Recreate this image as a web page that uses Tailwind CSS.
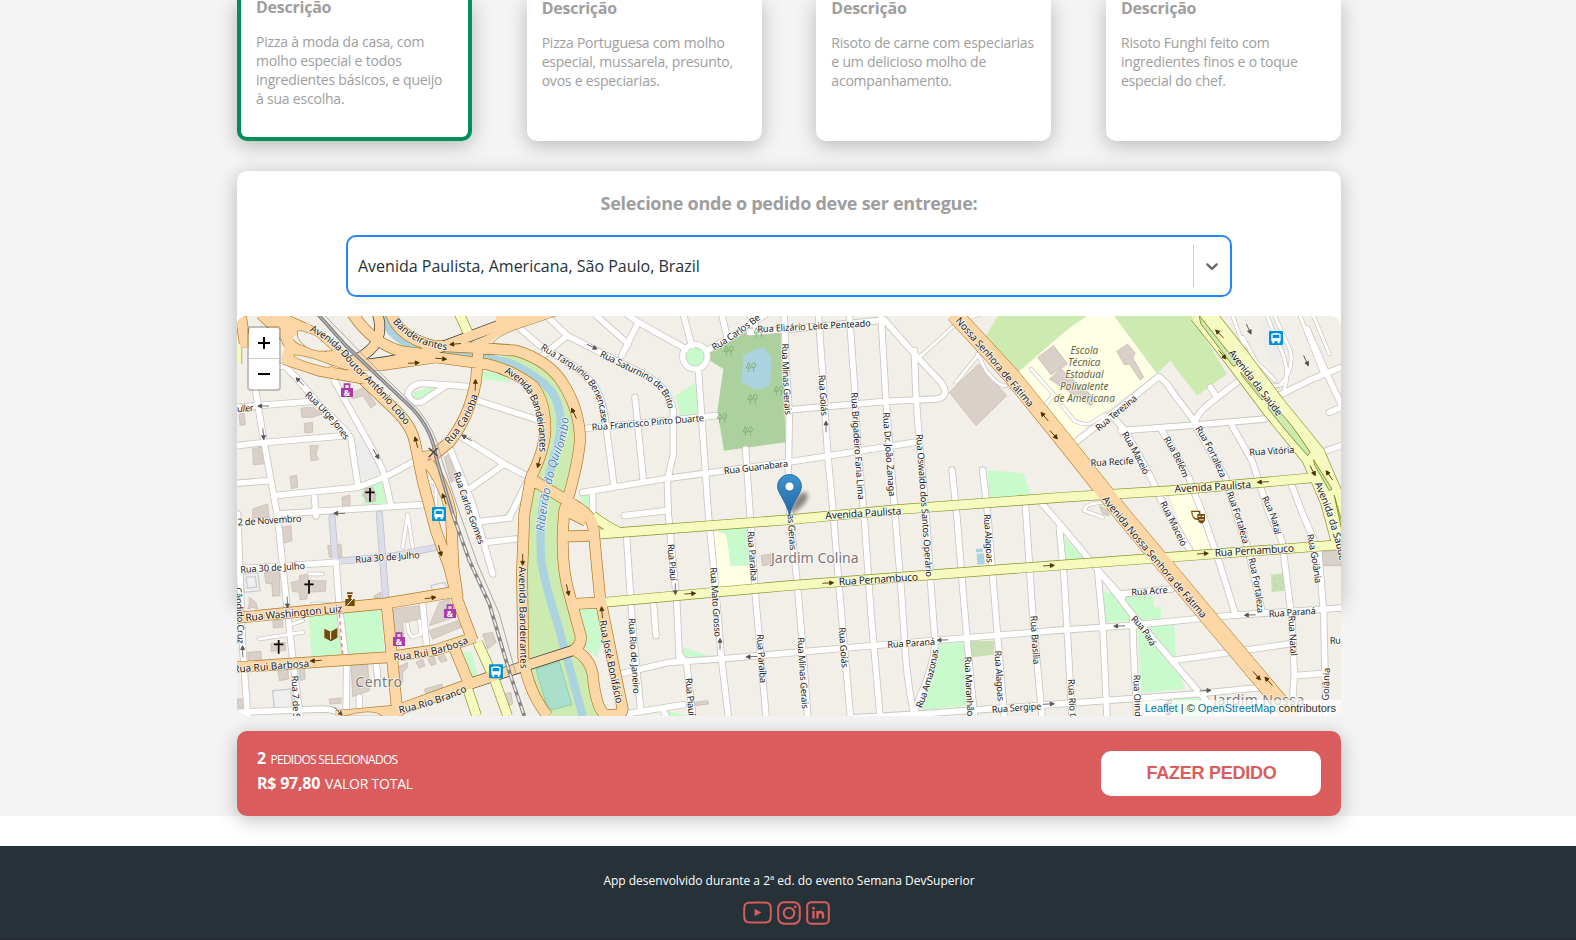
<!DOCTYPE html>
<html lang="pt-BR">
<head>
<meta charset="utf-8">
<title>DS Delivery</title>
<script src="https://cdn.jsdelivr.net/npm/@tailwindcss/browser@4"></script>
</head>
<body class="h-[940px] overflow-hidden bg-white font-['Open_Sans',sans-serif]">
<main class="flex h-[816px] flex-col bg-[#f4f4f4] pr-[235px] pl-[237px]">
  <section class="flex h-[141px] shrink-0 justify-between text-sm leading-[19px] tracking-[-0.21px] text-[#9e9e9e]">
    <article class="h-[141px] w-[235px] rounded-b-[10px] border-4 border-t-0 border-[#008e5b] bg-white px-[15px] shadow-[0_4px_20px_rgba(0,0,0,0.25)]">
      <h3 class="-mt-[4px] h-[36px] text-base leading-[22px] font-bold tracking-[-0.24px]">Descrição</h3>
      <p>Pizza à moda da casa, com<br>molho especial e todos<br>ingredientes básicos, e queijo<br>à sua escolha.</p>
    </article>
    <article class="h-[141px] w-[235px] rounded-b-[10px] bg-white px-[15px] shadow-[0_4px_20px_rgba(0,0,0,0.25)]">
      <h3 class="-mt-[3px] h-[36px] text-base leading-[22px] font-bold tracking-[-0.24px]">Descrição</h3>
      <p>Pizza Portuguesa com molho<br>especial, mussarela, presunto,<br>ovos e especiarias.</p>
    </article>
    <article class="h-[141px] w-[235px] rounded-b-[10px] bg-white px-[15px] shadow-[0_4px_20px_rgba(0,0,0,0.25)]">
      <h3 class="-mt-[3px] h-[36px] text-base leading-[22px] font-bold tracking-[-0.24px]">Descrição</h3>
      <p>Risoto de carne com especiarias<br>e um delicioso molho de<br>acompanhamento.</p>
    </article>
    <article class="h-[141px] w-[235px] rounded-b-[10px] bg-white px-[15px] shadow-[0_4px_20px_rgba(0,0,0,0.25)]">
      <h3 class="-mt-[3px] h-[36px] text-base leading-[22px] font-bold tracking-[-0.24px]">Descrição</h3>
      <p>Risoto Funghi feito com<br>ingredientes finos e o toque<br>especial do chef.</p>
    </article>
  </section>

  <section class="mt-[30px] mb-[125px] flex h-[435px] shrink-0 flex-col items-center rounded-[10px] bg-white shadow-[0_4px_20px_rgba(0,0,0,0.25)]">
    <h2 class="mt-[20px] h-[44px] shrink-0 text-lg leading-[25px] font-bold tracking-[-0.27px] text-[#9e9e9e]">Selecione onde o pedido deve ser entregue:</h2>
    <div class="flex h-[62px] w-[886px] shrink-0 items-center rounded-[10px] border-2 border-[#2684ff] bg-white pl-[10px]">
      <span class="grow text-base text-[#263238]">Avenida Paulista, Americana, São Paulo, Brazil</span>
      <span class="h-[42px] w-px bg-[#cccccc]"></span>
      <svg class="mx-2 size-5 fill-[#666666]" viewBox="0 0 20 20"><path d="M4.516 7.548c0.436-0.446 1.043-0.481 1.576 0l3.908 3.747 3.908-3.747c0.533-0.481 1.141-0.446 1.574 0 0.436 0.445 0.408 1.197 0 1.615-0.406 0.418-4.695 4.502-4.695 4.502-0.217 0.223-0.502 0.335-0.787 0.335s-0.57-0.112-0.789-0.335c0 0-4.287-4.084-4.695-4.502s-0.436-1.17 0-1.615z"/></svg>
    </div>
    <div class="relative mt-[19px] h-[400px] w-[1104px] shrink-0 overflow-hidden rounded-[10px] bg-[#f2efe9]">
<svg id="map" class="block h-[400px] w-[1104px] font-['Noto_Sans',sans-serif]" viewBox="3 6 3312 1200" fill="none">
<defs>
<g id="service">
<path d="M2938 0L3018 130L3078 195Q3110 225 3140 210M2988 0L3028 110L3118 200M3118 10L3163 110Q3175 170 3130 215M3095 10L3145 130Q3160 190 3145 225M2478 275L2515 320Q2540 335 2565 328L2608 300M2385 165L2470 260M2225 120L2250 170Q2290 220 2310 215M2160 205L2225 125M2160 30L2050 130M2170 20L2235 0M2450 245L2420 285M500 700L515 600L530 700M580 600V510Q590 490 600 520V600M220 780H260M230 870H280M70 975L200 955M170 930L200 920M515 930Q515 960 530 970L555 960L550 920M3020 70L3060 140M3190 0L3260 180M3230 0L3280 120M2545 590Q2545 570 2600 565M2545 590L2600 610"/>
</g>
<g id="minor">
<path d="M842 35L912 95L1012 155Q1060 195 1072 210Q1105 260 1112 350L1134 515M932 6L994 65L907 135M994 65L1112 125L1222 180Q1300 220 1312 290L1312 420L1294 500L1297 600L1322 860L1330 1035M1330 1020L1352 1050L1370 1206M1082 6L1177 90M1207 25L1157 125M1172 0L1207 25L1350 105M1342 0L1367 95M1387 165L1417 600L1437 800L1457 1040L1477 1206M1457 0L1472 65M1412 110L1500 60L1590 0M1540 55L1662 45L1945 18M1540 0L1565 50"/>
<path d="M1644 0L1650 150L1660 300L1657 470L1662 600L1685 820L1700 1000L1715 1206M1747 0L1760 180L1775 420L1792 600L1812 850L1825 1000L1843 1206M1840 0L1855 210L1865 400L1884 600L1905 900L1932 1206M1935 0L1950 260L1977 600L1995 820L2010 1040Q2018 1130 2035 1206M1945 18L2040 125L2115 205Q2145 250 2100 255L1950 262L1655 288M2035 110L2040 250L2050 380L2070 600L2085 820L2097 980Q2095 1050 2055 1140L2030 1206M1040 535L1282 495L1652 445L2035 385M2148 468L2162 600L2195 1000L2215 1206M2240 468L2255 600L2290 1030L2305 1206M2368 570L2390 900L2418 1206M2470 640L2485 800L2508 1206M2415 565L2480 640L2588 770L2688 900L2808 1040L2950 1206M2585 770L2600 930L2613 1206M2690 910L2692 990L2702 1206"/>
<path d="M1152 1080L1300 1045Q1400 1038 1450 1035L1910 995L2478 948L2678 935L2978 905L3315 882M1840 1212L2050 1200L2400 1175L2878 1140L3078 1120M1167 1200L1342 1172M1172 670L1187 900L1214 1190M1252 862L1260 965M1529 405L1557 830L1590 1206M1197 250L1222 500M1050 343L1440 305M1070 535V600M1165 605L1290 590M1280 1185L1290 1206"/>
<path d="M2518 385L2628 300L2768 188Q2790 200 2810 235L2878 325M2655 350L2878 333L3088 315M2878 320Q2890 290 2925 265L3003 205M2923 220L2943 250M2628 305L2668 350L2740 480L2790 590L2860 705M2778 350L2858 490L2900 600L2948 740L2998 900M2878 335L2968 490L3000 600L3038 710L3078 895M2988 335L3048 440L3100 600L3138 680L3168 920L3175 1080L3170 1155M3168 515L3200 600L3248 710L3263 900L3270 1206M3178 1085L3263 1078M2808 1040L3158 990M2653 840L2808 825M3118 250L3218 200L3315 160M3213 45L3268 170L3315 270M3280 295L3315 280M3258 415L3315 395M2600 785L2660 850"/>
<path d="M95 165L145 155L180 190L260 285Q330 345 345 375L365 510M295 200L400 390Q440 460 445 485L465 575M58 225L85 390L105 500L125 610L150 850L172 1050L192 1206M0 280L230 262M0 395L90 385L330 365M0 508L100 500M115 545L365 520L445 490L530 445M235 545L240 606M125 600L560 572M640 400L710 570L770 780M665 362L805 450L880 490M805 450L700 525M725 260L912 320M700 218L560 208Q520 215 515 240Q530 275 560 262L630 215M735 622L822 612M750 685L840 675M820 610L870 510M0 765L300 745L310 880L332 1060L330 1206M560 870L572 1000M5 600L20 1000L35 1206M0 1195L260 1185Q300 1185 320 1206M420 1040L425 1090M370 1150V1206"/>
</g>
<g id="ped"><path d="M288 610L298 740M430 600L450 860M300 742L450 730L600 700"/></g>
<g id="yellow"><path d="M1092 660L1250 648L1660 617L1980 587L2478 550L2800 530L3245 490M1070 605Q1100 630 1150 655M1105 865L1655 815L2490 752L3315 692M670 0L700 65M725 985L775 1095L815 1206M690 1110L722 1206M3 90V150"/></g>
<g id="orange">
<path d="M14 0L28 100M75 0L150 70M110 0L220 50L330 140L390 205L480 290Q530 340 538 390L560 500L600 650L640 760L665 860L710 980M150 60Q150 110 240 120L330 150L440 153L600 130L750 150Q822 165 890 215Q928 260 928 350Q925 410 885 490L865 600L858 780L862 1030Q875 1130 935 1206M145 135L250 170L390 195M350 0Q410 90 500 113L560 120M465 0Q490 70 590 95L700 100L840 110Q940 140 982 210Q1032 290 1032 380Q1025 460 985 590Q970 740 1000 840L1030 950Q1045 990 1010 1010M728 105L720 200Q700 310 640 385L590 425L550 430M570 440Q625 500 645 600L652 760L665 850M0 912L200 892L450 868L650 835M0 1060L450 1030L600 1008L715 970M452 870L470 1050L485 1206M300 1206L480 1190L700 1110L760 1090M650 990L700 1110M885 495L1010 570Q1065 600 1072 640L1092 850L1130 1040L1160 1185Q1160 1206 1110 1203Q1080 1190 1070 1080Q1060 1030 1015 1008M985 668L1078 664M1010 870L1100 865M990 590L1050 620"/>
</g>
<path id="ramp" d="M425 0Q445 70 400 110Q360 145 320 145M400 150Q500 140 600 105L840 15M700 1110L822 1070L1015 1008"/>
</defs>

<!-- land use -->
<path fill="#cdebb0" d="M800 115Q920 140 990 210Q1032 290 1025 380L970 600Q960 740 990 840L1040 990L1100 1206H930L870 1080L865 600L900 480Q940 400 935 310Q920 220 800 150ZM2290 0H2660L2340 180L2240 80ZM2628 0H2863L2973 180L2883 245L2803 140L2763 180Z"/>
<path fill="#ffffe5" d="M2340 180L2490 50L2560 0H2630L2763 180L2598 300L2510 375ZM2798 540L2890 520L2922 705L2865 710ZM1432 650L1480 665V755H1560L1555 810L1445 820Z"/>
<path fill="#add19e" d="M1422 110L1522 55H1634L1650 385L1464 410L1444 290L1462 165L1422 140Z"/>
<path fill="#aad3df" d="M1522 125Q1560 100 1585 102L1607 130L1602 215L1562 228L1517 205ZM2222 720L2243 718L2246 750L2224 752ZM2220 705L2240 703V714L2220 715Z"/>
<path fill="#c8facc" d="M1319 245L1379 205L1387 300L1332 305ZM2255 468L2362 478L2385 545L2260 560ZM2110 988L2183 980L2195 1175L2055 1188ZM1435 645L1540 640L1542 755L1485 755L1470 660ZM1025 885L1085 880L1100 985L1080 1030L1050 1005ZM1340 1000L1430 1030H1345ZM530 235L600 215L600 225L560 258H540ZM735 170L822 185V205L735 195ZM370 512L447 500L457 572L385 583ZM220 905L435 888L445 1012L225 1030ZM678 1018L705 1010L728 1090L703 1096ZM2600 830L2655 845H2750L2755 880H2775V915L2608 925ZM2705 940L2815 930L2820 1030L2845 1125L2715 1138ZM2485 670L2545 735L2482 740ZM2810 1145H2890L2900 1206H2800ZM800 600L822 585V600ZM1030 545L1062 540V600ZM1290 1190L1360 1206H1290Z"/>
<path fill="#c8dfb3" d="M2204 982L2274 980V1022L2206 1030ZM3105 782L3143 778L3146 830L3107 834Z"/>
<path fill="#aae0cb" stroke="#80c0a8" stroke-width="2" d="M900 1065L970 1043L1008 1172L936 1190Z"/>
<path fill="#ececec" d="M355 385L390 370L437 480L375 495ZM3070 30L3130 20L3170 110L3100 150Z"/>
<!-- buildings -->
<g fill="#d9d0c9" stroke="#c4b6ab" stroke-width="2">
<path d="M2140 235L2228 150L2312 245L2220 335ZM2405 130L2453 95L2495 150L2445 182ZM2440 195L2475 165L2580 255L2565 275ZM2642 112L2675 90L2698 118L2690 130L2723 190L2712 198L2680 150L2665 152ZM195 282L230 280L260 300L230 310H198ZM205 328L230 325V355L207 357ZM340 240L385 220L420 270L405 282L380 245L350 255ZM50 403L78 400L82 450L52 452ZM222 395H247L240 420L248 437L225 440ZM162 487L182 484L185 520L166 524ZM10 300L24 298L28 332L12 334ZM318 550L342 543V575L320 580ZM50 585L95 570L100 612H50ZM135 640L165 635L168 680L142 688ZM165 805L190 800V785L215 780L218 800L270 800L268 832L215 835L213 855L192 857L190 835L170 832ZM85 775L130 770L132 845L110 847L108 810L90 808ZM470 885L550 875L555 915L500 925L505 990L475 1000ZM610 865L640 855L655 910L580 935ZM580 950L665 920L675 940L590 975ZM345 1050L395 1045L400 1130L350 1148ZM105 988L148 985V1010L105 1012ZM35 1015L75 1012V1040L37 1042ZM125 1065L155 1060L158 1095L130 1100ZM565 1125L618 1110L620 1125L570 1140ZM740 960L770 955L780 985L755 1005ZM790 1145L825 1135L830 1170L795 1185ZM625 430L640 420L660 495L645 505ZM385 525L410 520L420 560L390 565ZM380 545L395 520L420 540L410 565ZM1575 725L1605 720V750L1580 755ZM1375 1165L1415 1160L1418 1170L1378 1175ZM3258 712L3315 708V755H3260ZM2590 575L2615 590L2620 605L2600 600ZM275 695L315 690L318 730H280ZM485 1060L515 1045V1060L500 1075V1105H490ZM540 1045L560 1035L567 1055L550 1063ZM575 1035L595 1028L600 1050L585 1055ZM605 1030L625 1022L633 1040L615 1045Z"/>
<path d="M40 850L60 865L65 885L50 880L35 885L40 868ZM415 845L435 835V850L415 855ZM3 1155H25V1190H3ZM280 1155L315 1152V1168L282 1170ZM190 1065L205 1062L208 1095L192 1100ZM110 920L140 918V940L112 942Z"/>
</g>
<g fill="#efefef" stroke="#ccc" stroke-width="4"><path d="M20 780L65 775L72 830L25 835ZM30 790L58 788L62 820L34 822ZM110 1130L165 1125L170 1180L115 1185ZM585 815L625 805L635 825L590 830Z"/></g>
<!-- river -->
<path stroke="#aad3df" stroke-width="25" d="M435 0Q460 80 570 108L720 122L822 148Q900 180 945 230Q985 290 970 370L935 500Q905 620 917 750Q935 840 965 930L1040 1206"/>
<!-- roads -->
<g stroke-linecap="round" stroke-linejoin="round">
<use href="#service" stroke="#c8c4be" stroke-width="13"/>
<use href="#minor" stroke="#cac6c0" stroke-width="22"/>
<circle cx="1377" cy="128" r="37" stroke="#cac6c0" stroke-width="20" fill="#c8facc"/>
<use href="#ped" stroke="#bbbbc8" stroke-width="21"/>
<use href="#service" stroke="#fff" stroke-width="9"/>
<use href="#ped" stroke="#dddde9" stroke-width="17"/>
<use href="#minor" stroke="#fff" stroke-width="17"/>
<circle cx="1377" cy="128" r="37" stroke="#fff" stroke-width="16"/>
<g stroke-linecap="butt">
<use href="#yellow" stroke="#8b952c" stroke-width="31"/><path stroke="#8b952c" stroke-width="76" d="M2895 -5L2990 115L3110 275L3232 425L3290 560L3325 690"/>
<use href="#orange" stroke="#ad7a25" stroke-width="35"/>
<use href="#ramp" stroke="#333" stroke-width="33"/>
<path stroke="#ad7a25" stroke-width="51" d="M2155 0L2330 190L2490 388L2658 600L2930 925L3170 1210"/>
<use href="#yellow" stroke="#f7fabf" stroke-width="27"/><path stroke="#f7fabf" stroke-width="72" d="M2895 -5L2990 115L3110 275L3232 425L3290 560L3325 690"/>
<use href="#orange" stroke="#fcd6a4" stroke-width="31"/>
<use href="#ramp" stroke="#fcd6a4" stroke-width="29"/>
<path stroke="#fcd6a4" stroke-width="48" d="M2155 0L2330 190L2490 388L2658 600L2930 925L3170 1210"/>
<path fill="#fcd6a4" d="M110 8L220 30L300 105L210 90L190 60L170 70L180 110L290 155L300 195L230 175L135 140L150 80ZM780 0H965L840 45L780 70L745 100L700 90L780 50Z"/>
<path stroke="#ad7a25" stroke-width="2" d="M965 4L840 46Q780 68 770 88L822 92"/>
</g>
<path fill="#f2efe9" stroke="#ad7a25" stroke-width="2" d="M185 50Q190 45 240 65L290 110L250 112Q200 105 185 70ZM175 122Q230 128 290 155Q280 165 250 155Q190 140 175 128ZM325 1206Q410 1180 440 1206Z"/>
<path fill="#cdebb0" stroke="#8b952c" stroke-width="3" d="M2890 5L3005 150L2992 157L2895 30ZM3015 175L3085 255L3078 258L3018 185ZM3098 272Q3140 285 3222 415L3215 425Q3140 340 3098 285ZM3233 438L3288 525L3280 530L3237 455ZM3295 545L3325 650L3320 655Z"/>
</g>
<!-- railway -->
<g stroke-width="4"><path stroke="#858585" stroke-width="11" d="M245 0L330 95L430 190L530 285Q590 350 600 430L650 600L700 740L760 870L822 1080L865 1206"/><path stroke="#eee" stroke-width="5" stroke-dasharray="22 12" d="M650 600L700 740L760 870L822 1080L865 1206"/><path stroke="#ccc" stroke-width="3" d="M245 0L330 95L430 190L530 285Q590 350 600 430L650 600"/><path stroke="#aaa" stroke-width="3" d="M262 0L440 183L545 285Q600 350 615 430L672 600L725 750L790 900L840 1080"/></g>
<path stroke="#e77" stroke-width="4" stroke-dasharray="12 10" d="M310 900L320 1020M575 438L620 425"/>
<path stroke="#444" stroke-width="4" d="M578 402L605 426M605 402L578 430"/>
<!-- trees in the park -->
<g stroke="#84b279" stroke-width="3" id="trees"></g>
<g fill="#b3d89f"><circle cx="3115" cy="795" r="3"/><circle cx="3132" cy="792" r="3"/><circle cx="3120" cy="812" r="3"/><circle cx="3135" cy="820" r="3"/></g>
<g id="arrows" stroke-width="4"></g>
<g id="labels" fill="#222" stroke="#fff" stroke-opacity=".75" stroke-width="5" stroke-linejoin="round" paint-order="stroke"></g>
<!-- points of interest -->
<g fill="#ac39ac"><path id="shop" d="M315 222H323V208H343V222H351V249H315ZM328 222H338V213H328Z" fill-rule="evenodd"/><use href="#shop" x="309" y="663"/><use href="#shop" x="156" y="747"/></g>
<g fill="#fff" font-size="25" font-weight="700"><text x="323" y="246">&amp;</text><text x="632" y="909">&amp;</text><text x="479" y="993">&amp;</text></g>
<g id="bus"><rect x="588" y="579" width="42" height="42" rx="3" fill="#0092da"/><path fill="#fff" fill-rule="evenodd" d="M595 588Q609 582 623 588V610H620V616H614V610H604V616H598V610H595ZM599 590V600H619V590Z"/></g>
<use href="#bus" x="171" y="472"/><use href="#bus" x="2511" y="-528"/>
<g stroke="#000" stroke-width="5"><path id="cross" d="M402 522V563M388 535H416"/><use href="#cross" x="-183" y="276"/><use href="#cross" x="-274" y="456"/></g>
<g fill="#734a08"><path d="M265 944L284 953L304 942V971L285 982L265 971ZM333 835H350V840H333ZM334 843H349L346 850L344 855H356V876H328V855H338Z"/><path stroke="#fff" stroke-width="3" d="M284 953V976M333 874L351 855"/><path fill-rule="evenodd" d="M2865 590H2893V600H2907V620Q2898 634 2888 624L2886 618Q2868 620 2865 590ZM2869 594Q2870 612 2884 614V600H2889V594ZM2888 605V609H2894V605ZM2898 605V609H2904V605ZM2890 616V619H2903V616Z"/></g>
</svg>
      <svg class="absolute top-[158px] left-[540px] h-[43px] w-[50px]" viewBox="0 0 50 43">
        <defs><filter id="soft" x="-50%" y="-50%" width="200%" height="200%"><feGaussianBlur stdDeviation="2.2"/></filter><linearGradient id="pin" x2="0" y2="1"><stop stop-color="#3f92cf"/><stop offset="1" stop-color="#2068a8"/></linearGradient></defs>
        <path d="M13 41L17 27Q24 16 30 19Q33 25 24 33Z" fill="#000" opacity=".45" filter="url(#soft)"/>
        <path d="M12.500 .6C5.500 .6 .6 6 .6 12.500C.6 19 8 25 12.500 41C17 25 24.400 19 24.400 12.500C24.400 6 19.500 .6 12.500 .6Z" fill="url(#pin)" stroke="#2e6c97"/><circle cx="12.500" cy="12.500" r="4.400" fill="#fff" stroke="#2e6c97" stroke-width=".6"/>
      </svg>
      <div class="absolute top-[10px] left-[10px] flex w-[34px] flex-col rounded-[4px] border-2 border-black/20 bg-white bg-clip-padding">
        <span class="flex h-[31px] items-center justify-center border-b border-[#cccccc]"><svg class="size-3" viewBox="0 0 12 12" stroke="#000" stroke-width="2"><path d="M0 6H12M6 0V12"/></svg></span>
        <span class="flex h-[30px] items-center justify-center"><svg class="size-3" viewBox="0 0 12 12" stroke="#000" stroke-width="2"><path d="M0 6H12"/></svg></span>
      </div>
      <div class="absolute right-0 bottom-0 bg-white/70 px-[5px] font-['Liberation_Sans',sans-serif] text-[11px] leading-[16.500px] text-[#333333]"><span class="text-[#0078a8]">Leaflet</span> | © <span class="text-[#0078a8]">OpenStreetMap</span> contributors</div>
    </div>
  </section>

  <section class="flex h-[85px] shrink-0 items-center justify-between rounded-[10px] bg-[#da5c5c] px-5 text-white shadow-[0_4px_20px_rgba(0,0,0,0.25)]">
    <div class="pb-[5px] leading-[26px]">
      <div class="text-xs tracking-[-0.72px]"><b class="mr-[5px] text-base">2</b>PEDIDOS SELECIONADOS</div>
      <div class="pt-px text-sm leading-[25px] tracking-[-0.21px]"><b class="mr-[5px] text-base leading-[25px] tracking-[-0.24px]">R$ 97,80</b>VALOR TOTAL</div>
    </div>
    <button class="h-[45px] w-[220px] rounded-[10px] bg-white pb-[2px] pl-px font-['Liberation_Sans',sans-serif] text-lg font-bold tracking-[-0.27px] text-[#da5c5c]">FAZER PEDIDO</button>
  </section>
</main>
<footer class="mt-[30px] flex h-[94px] flex-col items-center border-b border-[#282535] bg-[#263238] pt-[26px] text-white">
  <p class="ml-[2px] text-xs leading-[17px]">App desenvolvido durante a 2ª ed. do evento Semana DevSuperior</p>
  <div class="mt-[11px] mr-[4px] flex h-[25px] items-center gap-[5px]">
    <svg class="h-[23px] w-[29px]" viewBox="0 0 30 23" fill="none" stroke="#da5c5c" stroke-width="2"><path d="M5 1.500Q15 .7 25 1.500Q28 2 28.500 5Q29.100 11.500 28.500 18Q28 21 25 21.500Q15 22.300 5 21.500Q2 21 1.500 18Q.9 11.500 1.500 5Q2 2 5 1.500Z"/><path d="M12 7.500V15.500L19 11.500Z" fill="#da5c5c" stroke="none"/></svg>
    <svg class="size-6" viewBox="0 0 24 24" fill="none" stroke="#da5c5c" stroke-width="2"><rect x="1.200" y="1.200" width="21.600" height="21.600" rx="6"/><circle cx="12" cy="12" r="5.300"/><circle cx="18.300" cy="5.800" r="1.400" fill="#da5c5c" stroke="none"/></svg>
    <svg class="size-6" viewBox="0 0 24 24" fill="none" stroke="#da5c5c" stroke-width="2"><rect x="1.200" y="1.200" width="21.600" height="21.600" rx="4"/><path d="M7.500 10V17.500M11.500 10V17.500M11.500 13.500Q12 11 14.300 11Q17 11 17 14V17.500" stroke-width="2.400"/><circle cx="7.500" cy="7.200" r="1.400" fill="#da5c5c" stroke="none"/></svg>
  </div>
</footer>
<script>
const NS = 'http://www.w3.org/2000/svg';
const make = (parent, tag, attrs) => {
  const el = document.createElementNS(NS, tag);
  for (const k in attrs) el.setAttribute(k, attrs[k]);
  return parent.appendChild(el);
};
// Street names: text, centre line of the lettering, font size
const streets = [
  ['Avenida Doutor Antônio Lobo', 'M225 42Q300 75 360 160Q440 230 517 328', 30],
  ['Bandeirantes', 'M478 16Q530 85 635 98', 30],
  ['Rua Urge Jones', 'M212 238Q290 305 335 375', 28],
  ['uller', 'M3 285L54 281', 28],
  ['Rua Carioba', 'M632 385Q700 310 715 240', 30],
  ['Avenida Bandeirantes', 'M808 168Q925 215 921 415', 30],
  ['Rua Carlos Gomes', 'M662 475Q695 580 738 690', 28],
  ['Rua Tarquínio Benencase', 'M918 97L1020 160Q1100 215 1106 328', 28],
  ['Rua Saturnino de Brito', 'M1094 118L1220 180Q1300 220 1305 285', 28],
  ['Rua Francisco Pinto Duarte', 'M1067 340L1405 311', 28],
  ['Rua Guanabara', 'M1464 471L1657 448', 28],
  ['Rua Carlos Be', 'M1430 102Q1500 60 1570 6', 28],
  ['Rua Elizário Leite Penteado', 'M1564 46L1905 27', 28],
  ['Rua Minas Gerais', 'M1647 88Q1650 200 1657 303', 28],
  ['Rua Goiás', 'M1757 182L1766 306', 28],
  ['Rua Brigadeiro Faria Lima', 'M1855 235Q1864 400 1876 558', 28],
  ['Rua Dr. João Zanaga', 'M1950 295L1969 548', 28],
  ['Rua Oswaldo dos Santos Operário', 'M2050 360Q2066 580 2080 790', 28],
  ['Nossa Senhora de Fátima', 'M2165 14Q2280 145 2388 275', 30],
  ['Avenida Nossa Senhora de Fátima', 'M2605 550Q2760 740 2907 908', 30],
  ['Rua Terezina', 'M2582 345L2700 248', 28],
  ['Avenida da Saúde', 'M2984 110Q3070 220 3133 302', 30],
  ['Rua Recife', 'M2564 447L2694 440', 28],
  ['Rua Vitória', 'M3040 415L3176 407', 28],
  ['Rua Maceió', 'M2665 355Q2705 420 2732 480', 28],
  ['Rua Belém', 'M2790 370Q2830 430 2850 490', 28],
  ['Rua Fortaleza', 'M2885 338Q2935 415 2963 490', 28],
  ['Avenida Paulista', 'M2816 525L3046 511', 31],
  ['Rua Maceió', 'M2780 563Q2820 640 2845 695', 28],
  ['Rua Fortaleza', 'M2980 533Q3015 620 3030 690', 28],
  ['Rua Natal', 'M3085 548Q3120 610 3125 662', 28],
  ['Rua Goiânia', 'M3222 660Q3240 740 3247 808', 28],
  ['Avenida da Saúde', 'M3245 505Q3290 600 3322 740', 30],
  ['Avenida Paulista', 'M1768 605L1997 590', 31],
  ['Rua Pernambuco', 'M1808 803L2047 788', 31],
  ['Rua Pernambuco', 'M2936 717L3175 702', 31],
  ['as Gerais', 'M1664 600L1672 710', 28],
  ['Rua Piauí', 'M1304 690L1313 802', 28],
  ['Rua Mato Grosso', 'M1432 760L1446 970', 28],
  ['Rua Paraíba', 'M1544 652L1555 802', 28],
  ['Rua Paraíba', 'M1572 960L1582 1108', 28],
  ['Rua Rio de Janeiro', 'M1187 912L1202 1140', 28],
  ['Rua José Bonifácio', 'M1100 918Q1128 1070 1152 1168', 30],
  ['Rua Piauí', 'M1358 1092L1368 1206', 28],
  ['Rua Minas Gerais', 'M1694 970L1708 1185', 28],
  ['Rua Goiás', 'M1818 940L1827 1062', 28],
  ['Rua Paraná', 'M1954 992L2098 983', 28],
  ['Rua Amazonas', 'M2048 1180Q2085 1090 2098 1005', 28],
  ['Rua Alagoas', 'M2253 600L2262 747', 28],
  ['Rua Maranhão', 'M2195 1028L2204 1208', 28],
  ['Rua Alagoas', 'M2285 1010L2295 1162', 28],
  ['Rua Brasília', 'M2393 905L2402 1052', 28],
  ['Rua Sergipe', 'M2267 1187L2417 1176', 28],
  ['Rua Rio Claro', 'M2506 1095L2513 1265', 28],
  ['Rua Olinda', 'M2702 1082L2707 1225', 28],
  ['Rua', 'M2797 1155L2800 1206', 28],
  ['Rua Acre', 'M2686 835L2796 827', 28],
  ['Rua Pará', 'M2690 910Q2730 945 2753 995', 28],
  ['Rua Paraná', 'M3098 900L3240 890', 28],
  ['Rua Fortaleza', 'M3046 732Q3070 820 3074 898', 28],
  ['Rua Natal', 'M3167 905L3174 1027', 28],
  ['Goiânia', 'M3268 1160L3272 1060', 28],
  ['Rua', 'M3282 980L3330 978', 28],
  ['2 de Novembro', 'M5 625L197 613', 28],
  ['Rua 30 de Julho', 'M13 767L208 755', 28],
  ['Rua 30 de Julho', 'M358 737L552 722', 28],
  ['Rua Washington Luiz', 'M28 911L320 883', 31],
  ['Rua Rui Barbosa', 'M-8 1066L220 1048', 30],
  ['Rua Rui Barbosa', 'M472 1029Q600 1020 695 976', 30],
  ['Rua Rio Branco', 'M488 1188Q600 1165 690 1122', 30],
  ['Rua 7 de Setembro', 'M176 1085L187 1320', 28],
  ['Cândido Cruz', 'M5 820Q15 900 14 990', 28],
  ['Avenida Bandeirantes', 'M859 757L864 1065', 30],
];
const map = document.getElementById('map');
const defs = map.querySelector('defs');
const labels = document.getElementById('labels');
const addLabel = (name, d, size, extra) => {
  const id = 'street' + defs.childElementCount;
  const line = make(defs, 'path', { id, d });
  const text = make(labels, 'text', { 'font-size': size, dy: size * 0.35, textLength: line.getTotalLength() - 1, ...extra });
  make(text, 'textPath', { href: '#' + id }).textContent = name;
};
streets.forEach(s => addLabel(...s));
addLabel('Ribeirão do Quilombo', 'M912 652Q925 530 955 430Q985 370 985 308', 36, { fill: '#4f86b8', 'font-style': 'italic' });
['Escola', 'Técnica', 'Estadual', 'Polivalente', 'de Americana'].forEach((t, i) => {
  make(labels, 'text', { x: 2545, y: 121 + i * 36, 'font-size': 30, 'font-style': 'italic', fill: '#666633', 'text-anchor': 'middle' }).textContent = t;
});
[['Centro', 358, 1118, 140], ['Jardim Colina', 1605, 748, 263], ['Jardim Nossa', 2932, 1173, 273]].forEach(([t, x, y, w]) => {
  make(labels, 'text', { x, y, 'font-size': 42, fill: '#777', textLength: w }).textContent = t;
});
// One-way arrows: centre, angle, 0 = grey on streets / 1 = brown on avenues
const arrows = [[192,203,225,0],[82,276,180,0],[82,360,85,0],[420,420,60,0],[692,372,210,0],[310,598,180,0],
 [533,147,-3,1],[615,134,5,1],[658,90,175,1],[718,213,-88,1],[541,385,-105,1],[625,555,-110,1],[612,710,75,1],[583,852,-8,1],[154,865,88,0],[240,1040,176,1],[20,1012,-92,0],[307,1192,45,0],
 [1068,98,25,0],[1014,298,-115,1],[909,445,105,1],[1770,338,-90,0],[2426,308,230,1],[2453,362,48,1],[2951,60,225,1],[2959,122,50,1],[3081,504,177,1],[3230,470,62,1],[3280,484,235,1],
 [860,737,90,1],[995,828,78,1],[1098,895,-95,1],[1318,825,90,0],[1362,839,-3,1],[1452,990,-90,0],[1547,1028,177,0],[1776,807,-3,1],[2120,978,178,0],[2438,755,-3,1],[2438,1170,-3,0],[2900,719,-3,1],[3042,903,178,0],[2650,936,178,0],[2908,1130,-3,0],[3062,1085,50,1],[3098,1102,228,1],[3038,45,65,0],[3210,140,65,0]];
arrows.forEach(([x, y, r, brown]) => {
  const c = brown ? '#4a3300' : '#555';
  make(document.getElementById('arrows'), 'path', { d: 'M-17 0H8M5 -6L17 0L5 6Z', transform: `translate(${x} ${y}) rotate(${r})`, stroke: c, fill: c, 'stroke-width': 2.5 });
});
[[1478,110],[1545,160],[1550,255],[1628,230],[1458,312],[1535,352],[1568,55]].forEach(([x, y]) => {
  make(document.getElementById('trees'), 'path', { d: 'M-7 14V-2M-14 2L-7 -14L0 2ZM8 14V0M2 -6a6 7 0 1 0 12 0a6 7 0 1 0 -12 0', transform: `translate(${x} ${y})` });
});
</script>
</body>
</html>
